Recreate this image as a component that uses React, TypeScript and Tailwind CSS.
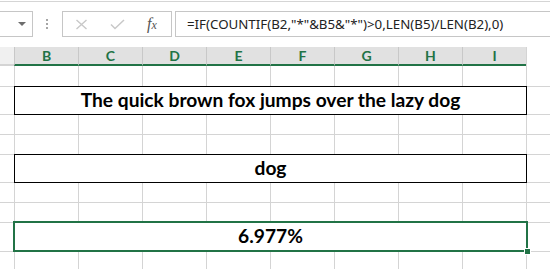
const cols = ["B", "C", "D", "E", "F", "G", "H", "I"]
const line = "border-[#d4d4d4]"

function GridRow({ h }: { h: string }) {
  return (
    <div className={`flex ${h}`}>
      <div className={`w-[14px] shrink-0 border-b ${line}`} />
      {[...cols, "J"].map((c) => (
        <div key={c} className={`w-[64px] shrink-0 border-l border-b ${line}`} />
      ))}
    </div>
  )
}

function MergedRow({ text }: { text: string }) {
  return (
    <div className="flex h-[29px] -mt-px">
      <div className={`w-[14px] shrink-0 border-b ${line}`} />
      <div className="w-[513px] shrink-0 border border-black flex items-center justify-center text-[19.2px] font-bold text-black">
        {text}
      </div>
      <div className={`flex-1 border-b ${line}`} />
    </div>
  )
}

export default function App() {
  return (
    <div className="w-[550px] h-[269px] overflow-hidden bg-white font-['Lato',sans-serif]">
      {/* formula bar */}
      <div className="mt-px h-[46px] border-t border-[#d5d5d5] pt-[9px] flex items-start">
        <div className="-ml-px w-[34px] h-[26px] border border-[#c6c6c6] flex items-center justify-end pr-[6px]">
          <div className="w-0 h-0 border-l-[4px] border-r-[4px] border-t-[4px] border-l-transparent border-r-transparent border-t-[#6d6d6d]" />
        </div>
        <div className="ml-[13px] h-[26px] flex flex-col justify-center gap-[2px]">
          <div className="w-[2px] h-[2px] bg-[#a6a6a6]" />
          <div className="w-[2px] h-[2px] bg-[#a6a6a6]" />
          <div className="w-[2px] h-[2px] bg-[#a6a6a6]" />
        </div>
        <div className="ml-[14px] w-[110px] h-[26px] border border-[#c6c6c6] flex items-center pl-[12px]">
          <svg width="13" height="11" viewBox="0 0 13 11">
            <path d="M1.5 1 L11.5 10 M11.5 1 L1.5 10" stroke="#c8c8c8" strokeWidth="1.4" fill="none" />
          </svg>
          <svg className="ml-[22px]" width="15" height="11" viewBox="0 0 15 11">
            <path d="M1 5.5 L5 9.5 L14 1" stroke="#c8c8c8" strokeWidth="1.5" fill="none" />
          </svg>
          <span className="ml-[22px] font-['Liberation_Serif',serif] italic text-[16px] text-[#555]">
            f<span className="text-[12px]">x</span>
          </span>
        </div>
        <div className="ml-[3px] flex-1 h-[26px] border-y border-l border-[#c6c6c6] flex items-center pl-[11px] pt-px font-['Noto_Sans',sans-serif] text-[13.3px] text-[#222] whitespace-nowrap">
          =IF(COUNTIF(B2,"*"&amp;B5&amp;"*")&gt;0,LEN(B5)/LEN(B2),0)
        </div>
      </div>

      {/* column headers */}
      <div className="flex h-[19px]">
        <div className="w-[14px] shrink-0 bg-[#f0f0f0] border-b-2 border-[#d4d4d4]" />
        {cols.map((c) => (
          <div
            key={c}
            className="w-[64px] shrink-0 bg-[#e1e1e1] border-l border-[#c8c8c8] border-b-2 border-b-[#217346] flex items-center justify-center text-[14px] font-bold text-[#217346]"
          >
            {c}
          </div>
        ))}
        <div className={`flex-1 border-l ${line}`} />
      </div>

      {/* sheet */}
      <GridRow h="h-[21px]" />
      <MergedRow text="The quick brown fox jumps over the lazy dog" />
      <GridRow h="h-[20px]" />
      <GridRow h="h-[20px]" />
      <MergedRow text="dog" />
      <GridRow h="h-[20px]" />
      <GridRow h="h-[20px]" />
      <div className="flex h-[31px] -mt-[2px]">
        <div className={`w-[13px] shrink-0 border-b ${line}`} />
        <div className="relative w-[515px] shrink-0 border-2 border-[#217346] flex items-center justify-center text-[19.2px] font-bold text-black">
          6.977%
          <div className="absolute -right-[5px] -bottom-[5px] w-[7px] h-[7px] bg-[#217346] border border-white" />
        </div>
        <div className={`flex-1 border-b ${line}`} />
      </div>
      <GridRow h="h-[20px]" />
    </div>
  )
}
